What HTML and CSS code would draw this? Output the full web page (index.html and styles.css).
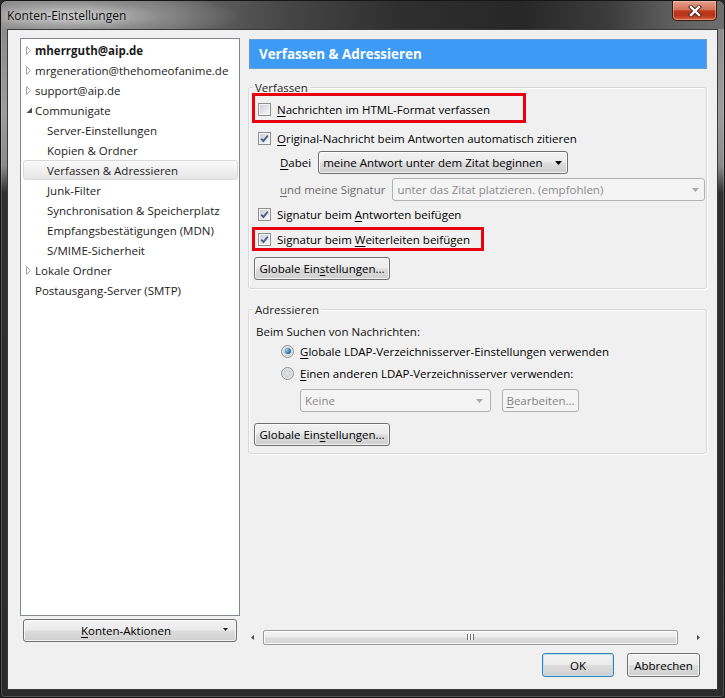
FILE: index.html
```html
<!DOCTYPE html>
<html lang="de">
<head>
<meta charset="utf-8">
<title>Konten-Einstellungen</title>
<link rel="stylesheet" href="styles.css">
</head>
<body>
<div class="window">
  <div class="titlebar">
    <span class="title">Konten-Einstellungen</span>
    <div class="close">
      <svg width="14" height="12" viewBox="0 0 14 12"><path d="M3 2 L11 10 M11 2 L3 10" stroke="#4a2018" stroke-width="4.2" stroke-linecap="square"/><path d="M3 2 L11 10 M11 2 L3 10" stroke="#fff" stroke-width="2.4" stroke-linecap="square"/></svg>
    </div>
  </div>
  <div class="client">
    <div class="main">
      <div class="leftcol">
        <div class="tree">
          <div class="ti"><span class="tw"><svg class="tri-c" width="6" height="9" viewBox="0 0 6 9"><path d="M0.5 0.5 L4.5 4.5 L0.5 8.5 Z" fill="#fff" stroke="#a2a2a2"/></svg></span><b>mherrguth@aip.de</b></div>
          <div class="ti"><span class="tw"><svg class="tri-c" width="6" height="9" viewBox="0 0 6 9"><path d="M0.5 0.5 L4.5 4.5 L0.5 8.5 Z" fill="#fff" stroke="#a2a2a2"/></svg></span>mrgeneration@thehomeofanime.de</div>
          <div class="ti"><span class="tw"><svg class="tri-c" width="6" height="9" viewBox="0 0 6 9"><path d="M0.5 0.5 L4.5 4.5 L0.5 8.5 Z" fill="#fff" stroke="#a2a2a2"/></svg></span>support@aip.de</div>
          <div class="ti"><span class="tw"><svg class="tri-e" width="7" height="7" viewBox="0 0 7 7"><path d="M6 0.5 L6 6 L0.5 6 Z" fill="#4e4e4e"/></svg></span>Communigate</div>
          <div class="ti child">Server-Einstellungen</div>
          <div class="ti child">Kopien &amp; Ordner</div>
          <div class="ti child sel">Verfassen &amp; Adressieren</div>
          <div class="ti child">Junk-Filter</div>
          <div class="ti child">Synchronisation &amp; Speicherplatz</div>
          <div class="ti child">Empfangsbestätigungen (MDN)</div>
          <div class="ti child">S/MIME-Sicherheit</div>
          <div class="ti"><span class="tw"><svg class="tri-c" width="6" height="9" viewBox="0 0 6 9"><path d="M0.5 0.5 L4.5 4.5 L0.5 8.5 Z" fill="#fff" stroke="#a2a2a2"/></svg></span>Lokale Ordner</div>
          <div class="ti"><span class="tw"></span>Postausgang-Server (SMTP)</div>
        </div>
        <div class="btn actions"><span class="albl"><u>K</u>onten-Aktionen</span><span class="aarr"><svg width="5" height="3" viewBox="0 0 5 3"><path d="M0 0 L5 0 L2.5 3 Z" fill="#222"/></svg></span></div>
      </div>

      <div class="rightcol">
        <div class="header">Verfassen &amp; Adressieren</div>

        <fieldset class="group g1">
          <legend>Verfassen</legend>
          <div class="row r1"><span class="cb"></span><span><u>N</u>achrichten im HTML-Format verfassen</span><span class="annot a1"></span></div>
          <div class="row r2"><span class="cb on"><svg width="9" height="9" viewBox="0 0 9 9"><path d="M1.2 4.6 L3.4 7 L7.8 1.6" fill="none" stroke="#4a5f8c" stroke-width="1.9"/></svg></span><span><u>O</u>riginal-Nachricht beim Antworten automatisch zitieren</span></div>
          <div class="ddrow d1"><span><u>D</u>abei</span><span class="dd dd1"><span class="ddt">meine Antwort unter dem Zitat beginnen</span><svg width="7" height="4" viewBox="0 0 7 4"><path d="M0 0 L7 0 L3.5 4 Z" fill="#000"/></svg></span></div>
          <div class="ddrow d2 dis"><span><u>u</u>nd meine Signatur</span><span class="dd dd2 ddis"><span class="ddt">unter das Zitat platzieren. (empfohlen)</span><svg width="7" height="4" viewBox="0 0 7 4"><path d="M0 0 L7 0 L3.5 4 Z" fill="#a8a8a8"/></svg></span></div>
          <div class="row r5"><span class="cb on"><svg width="9" height="9" viewBox="0 0 9 9"><path d="M1.2 4.6 L3.4 7 L7.8 1.6" fill="none" stroke="#4a5f8c" stroke-width="1.9"/></svg></span><span>Signatur beim <u>A</u>ntworten beifügen</span></div>
          <div class="row r6"><span class="cb on"><svg width="9" height="9" viewBox="0 0 9 9"><path d="M1.2 4.6 L3.4 7 L7.8 1.6" fill="none" stroke="#4a5f8c" stroke-width="1.9"/></svg></span><span>Signatur beim <u>W</u>eiterleiten beifügen</span><span class="annot a2"></span></div>
          <div class="btn gbtn gb1">Globale Ein<u>s</u>tellungen...</div>
        </fieldset>

        <fieldset class="group g2">
          <legend>Adressieren</legend>
          <div class="row s1">Beim Suchen von Nachrichten:</div>
          <div class="row rr1"><span class="rb"><span class="dot"></span></span><span><u>G</u>lobale LDAP-Verzeichnisserver-Einstellungen verwenden</span></div>
          <div class="row rr2"><span class="rb"></span><span><u>E</u>inen anderen LDAP-Verzeichnisserver verwenden:</span></div>
          <div class="ddrow d3 dis"><span class="dd dd3 ddis"><span class="ddt">Keine</span><svg width="7" height="4" viewBox="0 0 7 4"><path d="M0 0 L7 0 L3.5 4 Z" fill="#a8a8a8"/></svg></span><span class="btn bdis bearb"><u>B</u>earbeiten...</span></div>
          <div class="btn gbtn gb2">Globale Ein<u>s</u>tellungen...</div>
        </fieldset>

        <div class="hscroll">
          <span class="sarr sl"><svg width="3" height="5" viewBox="0 0 3 5"><path d="M3 0 L3 5 L0 2.5 Z" fill="#4a4a4a"/></svg></span>
          <span class="strack"><span class="thumb"><span class="grip"></span></span></span>
          <span class="sarr sr"><svg width="3" height="5" viewBox="0 0 3 5"><path d="M0 0 L0 5 L3 2.5 Z" fill="#4a4a4a"/></svg></span>
        </div>
      </div>
    </div>

    <div class="footer">
      <div class="btn fbtn ok">OK</div>
      <div class="btn fbtn cancel">Abbrechen</div>
    </div>
  </div>
</div>
</body>
</html>
```

FILE: styles.css
```css
* { box-sizing: border-box; }
html, body { margin: 0; padding: 0; background: #2a2a2a; }
body {
  width: 725px; height: 698px; overflow: hidden;
  font-family: "Open Sans", "Noto Sans", sans-serif;
  font-size: 11.5px; color: #000;
}
u { text-decoration: underline; text-underline-offset: 2px; }

.window {
  width: 725px; height: 698px;
  border: 1px solid #151515;
  border-radius: 7px 7px 4px 4px;
  padding: 0 6px 7px 6px;
  display: flex; flex-direction: column;
  background: linear-gradient(180deg, #858585 0px, #9c9c9c 110px, #8a8a8a 165px, #2f2f2f 192px, #2b2b2b 100%);
  box-shadow: inset 0 0 0 1px rgba(255,255,255,0.18);
  overflow: hidden;
}

.titlebar {
  height: 28px;
  margin: 0 -6px;
  padding: 0 7px 0 6px;
  display: flex; align-items: flex-start; justify-content: space-between;
  border-radius: 6px 6px 0 0;
  background:
    radial-gradient(ellipse 170px 26px at 70px 15px, rgba(215,215,215,0.85) 0%, rgba(170,170,170,0.45) 55%, rgba(140,140,140,0) 100%),
    linear-gradient(90deg, #7f7f7f 0%, #6d6d6d 22%, #454545 40%, #2f2f2f 55%, #272727 72%, #3c3c3c 84%, #5f5f5f 93%, #6e6e6e 100%);
}
.title {
  padding-top: 7px;
  font-size: 12px; line-height: 15px;
  color: #111;
  text-shadow: 0 0 6px rgba(255,255,255,0.7);
}
.close {
  width: 45px; height: 20px;
  border: 1px solid #3b1a12; border-top: none;
  border-radius: 0 0 5px 5px;
  display: flex; align-items: center; justify-content: center;
  background: linear-gradient(180deg, #e3a08f 0%, #d4735c 45%, #c13a1c 52%, #b8321a 75%, #d8643e 100%);
  box-shadow: inset 0 0 0 1px rgba(255,210,190,0.45);
}

.client {
  flex: 1;
  background: #f0f0f0;
  border: 1px solid #3a3a3a;
  display: flex; flex-direction: column;
  padding: 8px 10px 12px 12px;
}
.main { display: flex; height: 607px; gap: 6px; }

/* left side */
.leftcol { width: 220px; display: flex; flex-direction: column; }
.tree {
  flex: 1;
  background: #fff;
  border: 1px solid #828790;
  padding-top: 1px;
}
.ti {
  height: 20px;
  margin: 0 1px 0 2px;
  display: flex; align-items: center;
  border: 1px solid transparent;
  border-radius: 3px;
  white-space: nowrap;
  color: #1b1b1b;
}
.ti b { font-weight: 700; }
.tw { width: 11px; height: 18px; display: flex; align-items: center; padding-left: 2px; flex: none; }
.ti.child { padding-left: 23px; }
.ti.sel {
  border-color: #d9d9d9;
  background: linear-gradient(180deg, #fafafa 0%, #e6e6e6 100%);
}

.btn {
  border: 1px solid #707070;
  border-radius: 3px;
  background: linear-gradient(180deg, #f2f2f2 0%, #ebebeb 49%, #dddddd 51%, #cfcfcf 100%);
  box-shadow: inset 0 0 0 1px rgba(255,255,255,0.75);
  display: flex; align-items: center; justify-content: center;
  white-space: nowrap;
}
.actions { margin: 3px 3px 3px 3px; height: 23px; justify-content: flex-start; }
.albl { flex: 1; text-align: center; padding-left: 14px; }
.aarr { width: 22px; display: flex; justify-content: center; padding-bottom: 3px; }

/* right side */
.rightcol { flex: 1; min-width: 0; display: flex; flex-direction: column; }
.header {
  margin: 1px 0 0 3px;
  height: 30px;
  background: #3d9bf5;
  border: 1px solid #6a9fcf;
  color: #fff;
  font-weight: 700; font-size: 13.4px;
  padding-left: 9px;
  display: flex; align-items: center;
}

.group {
  margin: 11px 0 0 2px;
  border: 1px solid #d8d8d8;
  border-radius: 3px;
  padding: 0 1px 8px 7px;
  min-width: 0;
  box-shadow: 1px 1px 0 #fff, inset 1px 1px 0 #fff;
}
.group legend {
  padding: 0 2px;
  margin-left: -3px;
  line-height: 15px;
  color: #1e1e1e;
}
.g2 { margin-top: 13px; padding-bottom: 7px; }

.row { height: 20px; display: flex; align-items: center; white-space: nowrap; position: relative; }
.cb {
  width: 13px; height: 13px; flex: none;
  margin: 0 6px 0 2px;
  border: 1px solid #8e8f8f;
  padding: 1px;
  background: linear-gradient(135deg, #cdd0d5 0%, #f7f7f7 100%) content-box, #f4f4f4;
  display: flex; align-items: center; justify-content: center;
}
.cb svg { display: block; }
.rb {
  width: 13px; height: 13px; flex: none;
  margin-right: 6px;
  border: 1px solid #8b8d8f;
  border-radius: 50%;
  background: radial-gradient(circle at 50% 50%, #e4e6e9 0%, #d0d3d7 45%, #f6f6f6 80%);
  display: flex; align-items: center; justify-content: center;
}
.dot {
  width: 6px; height: 6px; border-radius: 50%;
  background: radial-gradient(circle at 35% 35%, #9ed6f3 0%, #2f79ad 55%, #17496f 100%);
}

.r1 { margin-top: 4px; }
.r2 { margin-top: 9px; }
.d1 { margin-top: 3px; }
.d2 { margin-top: 4px; }
.r5 { margin-top: 3px; }
.r6 { margin-top: 5px; }
.gb1 { margin-top: 8px; }

.ddrow { height: 23px; display: flex; align-items: center; padding-left: 24px; white-space: nowrap; }
.ddrow.dis > span:first-child { color: #6d6d6d; }
.dd {
  height: 23px;
  margin-left: 7px;
  border: 1px solid #707070;
  border-radius: 3px;
  background: linear-gradient(180deg, #f2f2f2 0%, #ebebeb 49%, #dddddd 51%, #cfcfcf 100%);
  box-shadow: inset 0 0 0 1px rgba(255,255,255,0.75);
  display: flex; align-items: center;
  padding: 0 5px 0 4px;
}
.ddt { flex: 1; overflow: hidden; }
.dd1 { width: 250px; }
.dd2 { flex: 1; margin-right: 0; }
.ddis {
  border-color: #adb2b5;
  background: #f4f4f4;
  box-shadow: none;
  color: #8b8b8b;
}
.d3 { padding-left: 44px; margin-top: 6px; }
.dd3 { width: 191px; margin-left: 0; padding-right: 7px; }
.ddrow.d3 > span:first-child { color: #8b8b8b; }
.bearb { margin-left: 11px; width: 77px; height: 23px; }
.bdis {
  border-color: #adb2b5;
  background: #f4f4f4;
  box-shadow: none;
  color: #838383;
}

.gbtn { width: 136px; height: 23px; margin-left: -2px; }
.s1 { margin-top: 4px; color: #111; }
.rr1 { padding-left: 25px; }
.rr2 { padding-left: 25px; margin-top: 2px; }
.gb2 { margin-top: 11px; }

.annot {
  position: absolute;
  border: 3px solid #e8000e;
  pointer-events: none;
}
.a1 { left: -4px; top: -6px; width: 274px; height: 30px; }
.a2 { left: -4px; top: -2px; width: 232px; height: 24px; }

.hscroll {
  margin-top: auto;
  height: 16px;
  display: flex; align-items: center;
}
.sarr { width: 17px; height: 16px; display: flex; align-items: center; justify-content: center; flex: none; }
.sl { justify-content: flex-start; padding-left: 5px; }
.strack { flex: 1; height: 16px; display: flex; align-items: center; }
.thumb {
  width: 415px; height: 15px;
  border: 1px solid #9a9a9a;
  border-radius: 2px;
  background: linear-gradient(180deg, #f4f4f4 0%, #ececec 48%, #dcdcdc 52%, #d6d6d6 100%);
  box-shadow: inset 0 0 0 1px rgba(255,255,255,0.8);
  display: flex; align-items: center; justify-content: center;
}
.grip {
  width: 7px; height: 6px;
  background: repeating-linear-gradient(90deg, #6e6e6e 0px, #6e6e6e 1px, #f6f6f6 1px, #f6f6f6 3px);
}

.footer {
  display: flex; justify-content: flex-end; gap: 13px;
  margin-top: 8px; padding-right: 7px;
}
.fbtn { height: 24px; }
.ok {
  width: 72px;
  border-color: #3c7fb1;
  box-shadow: inset 0 0 0 1px #b6e0f7;
}
.cancel { width: 73px; }
```
